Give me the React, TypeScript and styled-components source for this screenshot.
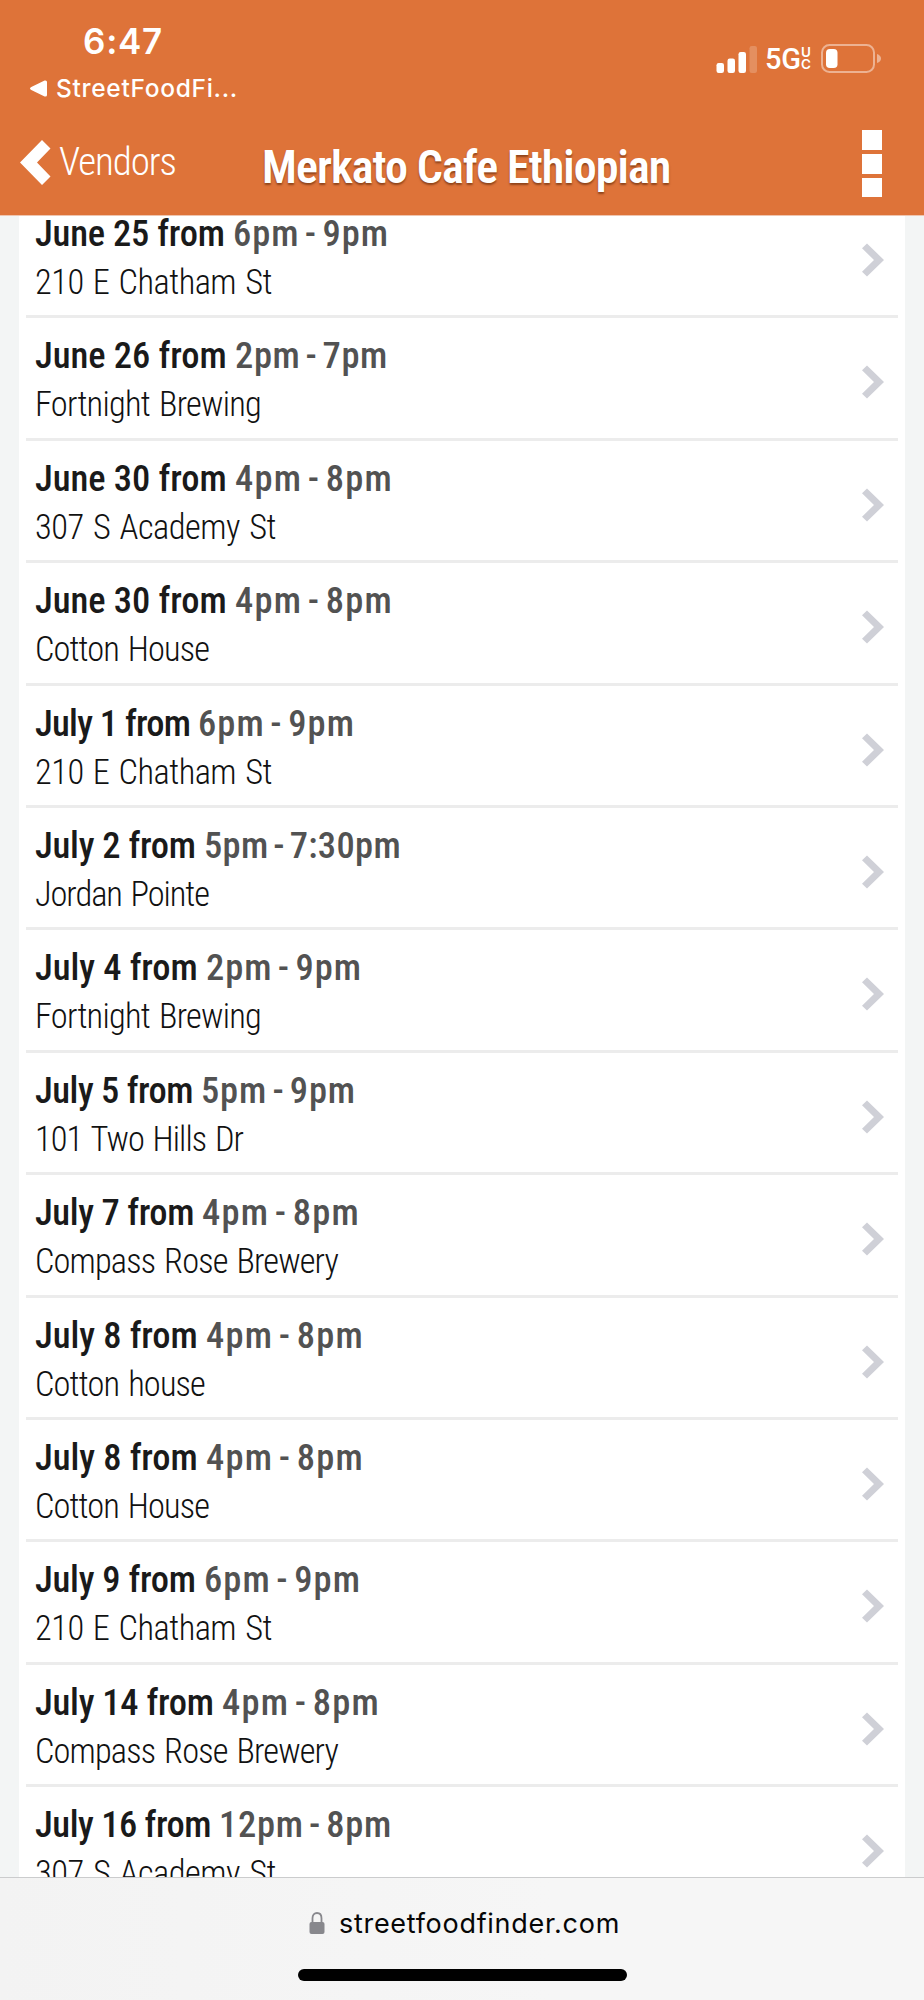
import React, { useLayoutEffect, useRef, useState } from 'react';
import styled, { createGlobalStyle } from 'styled-components';

const GlobalStyle = createGlobalStyle`
  * { box-sizing: border-box; }
  body { margin: 0; background: #f3f5f5; }
`;

const ui = "'Inter', sans-serif";
const condensed = "'Roboto Condensed', 'Roboto', sans-serif";

const Screen = styled.div`
  display: flex;
  flex-direction: column;
  width: 924px;
  height: 2000px;
  overflow: hidden;
  background: #f3f5f5;
  font-family: ${condensed};
`;

const Header = styled.header`
  display: flex;
  flex-direction: column;
  flex: none;
  height: 216px;
  background: #de7339;
  border-bottom: 1px solid #efc5af;
  color: #fff;
`;

const StatusBar = styled.div`
  display: flex;
  justify-content: space-between;
  height: 112px;
  padding: 21px 42px 0 29px;
  font-family: ${ui};
`;

const Clock = styled.div`
  padding-left: 54px;
  font-size: 35px;
  font-weight: 600;
  line-height: 41px;
`;

const BackToApp = styled.div`
  display: flex;
  align-items: center;
  gap: 9px;
  margin-top: 11px;
  font-size: 24.5px;
  font-weight: 500;
  line-height: 30px;
`;

const Indicators = styled.div`
  display: flex;
  align-items: center;
  height: 29px;
  margin-top: 23px;
`;

const Network = styled.div`
  display: flex;
  margin-left: 7px;
  font-family: 'Roboto', sans-serif;
  font-size: 29px;
  font-weight: 500;
  line-height: 34px;
`;

const NetworkTier = styled.div`
  display: flex;
  flex-direction: column;
  width: 12px;
  margin-right: 8px;
  padding-top: 4px;
  font-family: ${ui};
  font-size: 13.5px;
  font-weight: 600;
  line-height: 12px;
`;

const NavBar = styled.div`
  display: grid;
  grid-template-columns: 242px 1fr 62px;
  height: 103px;
  padding-left: 20px;
`;

const BackButton = styled.div`
  display: flex;
  gap: 8px;
  padding-top: 27px;
  font-size: 39px;
  font-weight: 300;
  line-height: 46px;
`;

const Title = styled.h1`
  margin: 0;
  padding-top: 26px;
  font-size: 46px;
  font-weight: 600;
  line-height: 58px;
  text-shadow: 0 2px 2px rgba(80, 30, 0, 0.55);
`;

const Menu = styled.div`
  display: flex;
  flex-direction: column;
  gap: 4px;
  padding-top: 18px;
`;

const MenuSquare = styled.i`
  width: 20px;
  height: 19.8px;
  background: #fff;
`;

const Viewport = styled.main`
  flex: 1;
  min-height: 0;
  overflow: hidden;
`;

const List = styled.ul`
  margin: -20.1px 19px 0;
  padding: 0 7px;
  background: #fff;
  list-style: none;
`;

const Row = styled.li`
  display: flex;
  justify-content: space-between;
  height: 122.41px;
  padding: 14px 14px 0 9px;
  border-bottom: 3px solid #ececec;
`;

const When = styled.div`
  display: flex;
  height: 48px;
  font-size: 36.5px;
  font-weight: 500;
  line-height: 48px;
  color: #1a1a1a;
`;

const Hours = styled.span`
  color: #525252;
  word-spacing: -4px;
`;

const Place = styled.div`
  font-size: 34.4px;
  font-weight: 300;
  line-height: 48px;
  word-spacing: 2px;
  color: #111;
`;

const RowChevron = styled.svg`
  flex: none;
  margin-top: 33px;
`;

const Footer = styled.footer`
  display: flex;
  flex-direction: column;
  align-items: center;
  flex: none;
  height: 123px;
  background: linear-gradient(90deg, #f3f3f3, #f6f6f6 60%);
  border-top: 1px solid #cbcccd;
`;

const Address = styled.div`
  display: flex;
  align-items: flex-start;
  gap: 14px;
  margin-top: 29px;
  padding-left: 5px;
  height: 62px;
  font-family: ${ui};
  font-size: 27px;
  line-height: 34px;
  color: #060606;
`;

const LockIcon = styled.svg`
  margin-top: 5px;
`;

const HomeBar = styled.div`
  width: 329px;
  height: 12px;
  border-radius: 6px;
  background: #000;
`;

const FitBox = styled.span`
  display: block;
  white-space: pre;
`;

/* Tracks a line of text so that it fills the given width. */
function Fit({ width, children }: { width: number; children: string }) {
  const ref = useRef<HTMLSpanElement>(null);
  const [tracking, setTracking] = useState(0);
  useLayoutEffect(() => {
    const node = ref.current;
    if (!node) return;
    const range = document.createRange();
    range.selectNodeContents(node);
    const current = range.getBoundingClientRect().width;
    setTracking((t) => t + (width - current) / children.length);
  }, [width, children]);
  return (
    <FitBox ref={ref} style={{ width, letterSpacing: tracking }}>
      {children}
    </FitBox>
  );
}

type Stop = [date: string, dateWidth: number, hours: string, hoursWidth: number, place: string, placeWidth: number];

const stops: Stop[] = [
  ['June 25', 198, '6pm - 9pm', 156, '210 E Chatham St', 237],
  ['June 26', 200, '2pm - 7pm', 153, 'Fortnight Brewing', 226],
  ['June 30', 200, '4pm - 8pm', 158, '307 S Academy St', 241],
  ['June 30', 200, '4pm - 8pm', 158, 'Cotton House', 174],
  ['July 1', 163, '6pm - 9pm', 157, '210 E Chatham St', 237],
  ['July 2', 169, '5pm - 7:30pm', 197, 'Jordan Pointe', 174],
  ['July 4', 171, '2pm - 9pm', 156, 'Fortnight Brewing', 226],
  ['July 5', 166, '5pm - 9pm', 155, '101 Two Hills Dr', 208],
  ['July 7', 167, '4pm - 8pm', 158, 'Compass Rose Brewery', 303],
  ['July 8', 171, '4pm - 8pm', 158, 'Cotton house', 170],
  ['July 8', 171, '4pm - 8pm', 158, 'Cotton House', 174],
  ['July 9', 169, '6pm - 9pm', 157, '210 E Chatham St', 237],
  ['July 14', 187, '4pm - 8pm', 158, 'Compass Rose Brewery', 303],
  ['July 16', 184, '12pm - 8pm', 173, '307 S Academy St', 241],
];

export default function App() {
  return (
    <>
      <GlobalStyle />
      <Screen>
        <Header>
          <StatusBar>
            <div>
              <Clock>
                <Fit width={80}>6:47</Fit>
              </Clock>
              <BackToApp>
                <svg width="18" height="17" viewBox="0 0 18 17" fill="#fff">
                  <path d="M1.8 7.2 15.6.5Q18 0 18 2v13q0 2-2.4 1.5L1.8 9.8Q0 8.5 1.8 7.2Z" />
                </svg>
                <Fit width={182}>StreetFoodFi...</Fit>
              </BackToApp>
            </div>
            <Indicators>
              <svg width="42" height="28" viewBox="0 0 42 28" fill="#fff">
                <rect x="0.5" y="18" width="7.5" height="10" rx="2.2" />
                <rect x="11.5" y="13.5" width="7.5" height="14.5" rx="2.2" />
                <rect x="22.5" y="7" width="7.5" height="21" rx="2.2" />
                <rect x="33.5" y="1" width="7.5" height="27" rx="2.2" opacity="0.2" />
              </svg>
              <Network>
                <Fit width={36}>5G</Fit>
                <NetworkTier>
                  <span>U</span>
                  <span>C</span>
                </NetworkTier>
              </Network>
              <svg width="61" height="29" viewBox="0 0 61 29">
                <rect x="1" y="1" width="52" height="27" rx="7.5" fill="none" stroke="#fff" strokeWidth="2" opacity="0.45" />
                <rect x="5" y="5" width="11.5" height="19" rx="3.8" fill="#fff" />
                <path d="M56 10q4 1.5 4 4.5t-4 4.5Z" fill="#fff" opacity="0.45" />
              </svg>
            </Indicators>
          </StatusBar>
          <NavBar>
            <BackButton>
              <svg width="31" height="46" viewBox="0 0 31 46" fill="#fff">
                <path d="M22 1 30.5 9.5 17 23.5 30.5 37.5 22 46 0 23.5Z" />
              </svg>
              <Fit width={117}>Vendors</Fit>
            </BackButton>
            <Title>
              <Fit width={408.5}>Merkato Cafe Ethiopian</Fit>
            </Title>
            <Menu>
              <MenuSquare />
              <MenuSquare />
              <MenuSquare />
            </Menu>
          </NavBar>
        </Header>
        <Viewport>
          <List>
            {stops.map(([date, dateWidth, hours, hoursWidth, place, placeWidth], i) => (
              <Row key={i}>
                <div>
                  <When>
                    <Fit width={dateWidth}>{`${date} from `}</Fit>
                    <Hours>
                      <Fit width={hoursWidth}>{hours}</Fit>
                    </Hours>
                  </When>
                  <Place>
                    <Fit width={placeWidth}>{place}</Fit>
                  </Place>
                </div>
                <RowChevron width="22" height="34" viewBox="0 0 22 34" fill="#cfd0d7">
                  <path d="M5 .5 22 17 5 33.5 0 28.7 12 17 0 5.3Z" />
                </RowChevron>
              </Row>
            ))}
          </List>
        </Viewport>
        <Footer>
          <Address>
            <LockIcon width="16" height="22" viewBox="0 0 16 22">
              <path d="M3.5 11V6.2C3.5 3 5.4 1 8 1s4.5 2 4.5 5.2V11" fill="none" stroke="#88888d" strokeWidth="1.8" />
              <rect x="0.5" y="10" width="15" height="12" rx="2" fill="#88888d" />
            </LockIcon>
            <Fit width={281}>streetfoodfinder.com</Fit>
          </Address>
          <HomeBar />
        </Footer>
      </Screen>
    </>
  );
}
